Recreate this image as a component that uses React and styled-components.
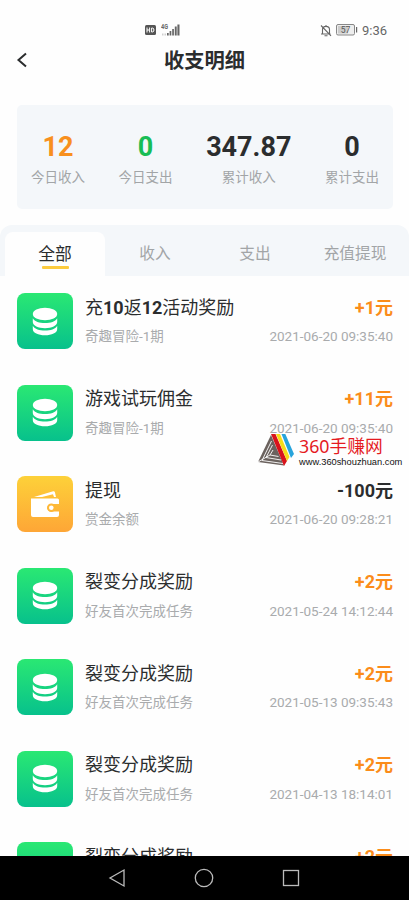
import React from 'react';
import styled, { createGlobalStyle, css } from 'styled-components'

const GlobalStyle = createGlobalStyle`
	* {
		box-sizing: border-box;
	}

	body {
		margin: 0;
		background: #fefefe;
		font-family: Roboto, "Noto Sans CJK SC", sans-serif;
		color: #2b2d2e;
	}
`

const Screen = styled.div`
	display: flex;
	flex-direction: column;
	width: 409px;
	height: 900px;
	overflow: hidden;
	background: #fefefe;
`

const StatusBar = styled.div`
	display: flex;
	align-items: center;
	justify-content: space-between;
	height: 22px;
	margin-top: 19px;
	padding: 0 22px 0 145px;
	flex: none;
`

const StatusGroup = styled.div`
	display: flex;
	align-items: center;
	gap: ${({ $gap }) => $gap}px;
`

const Clock = styled.span`
	padding-top: 1px;
	font-size: 13px;
	line-height: 22px;
	color: #666;
`

const Header = styled.header`
	display: grid;
	grid-template-columns: 44px 1fr 44px;
	align-items: center;
	height: 38px;
	flex: none;
`

const BackButton = styled.button`
	display: flex;
	padding: 0 0 2px 14px;
	border: 0;
	background: none;
`

const PageTitle = styled.h1`
	margin: 0;
	padding-top: 1px;
	font-size: 20.3px;
	font-weight: 700;
	line-height: 38px;
	text-align: center;
`

const Summary = styled.section`
	display: flex;
	justify-content: space-between;
	height: 104px;
	margin: 26px 16px 0 17px;
	padding: 26px 14px 0;
	border-radius: 5px;
	background: #f4f7fa;
	flex: none;
`

const Stat = styled.div`
	display: flex;
	flex-direction: column;
	align-items: center;
`

const StatValue = styled.strong`
	font-size: 27px;
	line-height: 32px;
	font-weight: 700;
	color: ${({ $color }) => $color || '#2b2d2e'};
`

const StatLabel = styled.span`
	margin-top: 4px;
	font-size: 13.5px;
	line-height: 20px;
	color: #a2a5a7;
`

const Tabs = styled.nav`
	display: grid;
	grid-template-columns: repeat(4, 100px);
	height: 51px;
	margin-top: 16px;
	padding: 7px 4px 0 5px;
	border-radius: 12px 12px 0 0;
	background: #f4f7fa;
	flex: none;
`

const Tab = styled.button`
	display: flex;
	flex-direction: column;
	align-items: center;
	padding: 10px 0 0;
	border: 0;
	background: none;
	font-family: inherit;
	font-size: 15.7px;
	line-height: 24px;
	color: #a2a5a7;

	${({ $active }) => $active && css`
		border-radius: 8px 8px 0 0;
		background: #fefefe;
		font-size: 16.8px;
		color: #2b2d2e;

		&::after {
			content: "";
			width: 27px;
			height: 3px;
			border-radius: 1px;
			background: #fccb3f;
		}
	`}
`

const List = styled.ul`
	flex: 1;
	min-height: 0;
	margin: 0;
	padding: 17px 16px 0 17px;
	overflow: hidden;
	list-style: none;
`

const Row = styled.li`
	display: flex;
	height: 91.5px;
`

const IconTile = styled.div`
	display: flex;
	align-items: center;
	justify-content: center;
	width: 56px;
	height: 56px;
	margin-right: 12px;
	border-radius: 8px;
	background: ${({ $wallet }) => $wallet
		? 'linear-gradient(#fdd139, #fea636)'
		: 'linear-gradient(#2ae873, #07c18c)'};
	flex: none;
`

const Detail = styled.div`
	display: flex;
	flex: 1;
	flex-direction: column;
	align-items: ${({ $end }) => $end ? 'flex-end' : 'flex-start'};
	white-space: nowrap;
`

const Name = styled.span`
	padding-top: .6px;
	font-size: 18px;
	line-height: 28px;

	& b {
		font-weight: 700;
	}
`

const Amount = styled.span`
	padding-top: .6px;
	font-size: 18px;
	font-weight: 700;
	line-height: 28px;
	color: ${({ $out }) => $out ? '#2b2d2e' : '#fb8c1a'};
`

const Note = styled.span`
	margin-top: 4.9px;
	font-size: 13.5px;
	line-height: 20px;
	color: #a9abad;
`

const NavBar = styled.footer`
	display: flex;
	align-items: center;
	justify-content: center;
	gap: 67px;
	height: 44px;
	padding-right: 1px;
	background: #000;
	flex: none;
`

// サイトロゴは一覧の上に重ねて表示する
const SiteMark = styled.div`
	position: absolute;
	top: 434px;
	left: 258px;
	display: flex;
	gap: 5px;
`

const SiteText = styled.div`
	display: flex;
	flex-direction: column;
	padding-top: 1px;
	white-space: nowrap;
`

const SiteName = styled.span`
	font-family: "Noto Sans", "Noto Sans CJK SC", sans-serif;
	font-size: 17.8px;
	line-height: 23px;
	color: #e51a1f;
`

const SiteUrl = styled.span`
	font-family: "Liberation Sans", Arial, sans-serif;
	font-size: 9.3px;
	line-height: 8px;
	color: #111;
`

const SignalIcon = () => (
	<svg width="21" height="14" viewBox="0 0 21 14">
		<text x="0" y="6" fontSize="7" fontWeight="700" textLength="7" lengthAdjust="spacingAndGlyphs" fill="#666">4G</text>
		<g fill="#666">
			<rect x="1" y="10.5" width="1.5" height="2" opacity=".3" />
			<rect x="3.5" y="10.5" width="1.5" height="2" opacity=".3" />
			<rect x="6" y="10" width="1.7" height="2.5" />
			<rect x="8.6" y="8" width="1.7" height="4.5" />
			<rect x="11.2" y="6" width="1.7" height="6.5" />
			<rect x="13.8" y="3.5" width="1.9" height="9" />
			<rect x="16.4" y="1.5" width="2.1" height="11" />
		</g>
	</svg>
)

const HdIcon = () => (
	<svg width="11" height="10" viewBox="0 0 11 10">
		<rect width="11" height="10" rx="1.5" fill="#555" />
		<path d="M2 2.5v5M4.6 2.5v5M2 5h2.6M6.6 3v4h1.2l1-1V4l-1-1z" fill="none" stroke="#fff" />
	</svg>
)

const MuteIcon = () => (
	<svg width="12" height="13" viewBox="0 0 12 13" fill="none" stroke="#666" strokeWidth="1.1">
		<path d="M1 10h9.5M2.500 9.500V5.600c0-1.900 1.500-3.200 3.500-3.200s3.500 1.300 3.500 3.200v3.900M6 2.4V1M4.500 11.800h3M1 1.500l10 10.3" />
	</svg>
)

const BatteryIcon = () => (
	<svg width="22" height="12" viewBox="0 0 22 12">
		<rect x=".5" y=".5" width="18" height="10.5" rx="1.5" fill="#eee" stroke="#888" />
		<rect x="2" y="2" width="10" height="7.5" fill="#ccc" />
		<rect x="20" y="3" width="1.2" height="5.5" fill="#666" />
		<text x="4.7" y="9" fontSize="8.5" fill="#555">57</text>
	</svg>
)

const CoinsIcon = () => (
	<svg width="26" height="29" viewBox="0 0 26 29" fill="#fff">
		<ellipse cx="13" cy="7" rx="12.2" ry="6.2" />
		<path d="M.8 11.2c2 3.6 6.5 4.8 12.2 4.8s10.200-1.200 12.200-4.800v3.800c0 3.700-5.500 6.200-12.200 6.200S.8 18.700.8 15z" />
		<path d="M.8 18.700c2 3.500 6.500 4.700 12.200 4.700s10.200-1.200 12.200-4.700v3.300c0 3.900-5.500 6.300-12.200 6.300S.8 25.900.8 22z" />
	</svg>
)

const WalletIcon = () => (
	<svg width="30" height="28" viewBox="0 0 30 28">
		<path d="M4 7L23.2 1.300c.8-.3 1.500.1 1.700.9L26 7z" fill="#fff" />
		<path d="M12 7h12l-1-2.800z" fill="#febf3a" />
		<path d="M1 8.500h26.500a1.500 1.500 0 0 1 1.500 1.500v4h-7.800a3.700 3.700 0 0 0 0 7.400H29V25a2 2 0 0 1-2 2H3a2 2 0 0 1-2-2z" fill="#fff" />
		<circle cx="21.3" cy="17.700" r="4.300" fill="#feb838" />
		<circle cx="21.3" cy="17.700" r="2.300" fill="#fff" />
	</svg>
)

const SiteLogo = () => (
	<svg width="36" height="33" viewBox="0 0 36 33">
		<path d="M13 1L0 28l26 3.500z" fill="#6b625e" />
		<path d="M13.500 7L4 26.500l21 3M14.500 11L8 23.500l15 2.500M15 16l-3 5 8.500 1.500M0 28l12-7" fill="none" stroke="#fff" strokeWidth=".9" />
		<path d="M13 0h4.500l11.500 27-3 5z" fill="#d8141c" />
		<path d="M18 0h4l9.500 23-2.500 4z" fill="#f8dc18" />
		<path d="M23.500 0h3.800L36 20l-3 4z" fill="#27a4dc" />
	</svg>
)

const stats = [
	{ value: '12', label: '今日收入', color: '#f8901e' },
	{ value: '0', label: '今日支出', color: '#18bd55' },
	{ value: '347.87', label: '累计收入' },
	{ value: '0', label: '累计支出' },
]

const tabs = ['全部', '收入', '支出', '充值提现']

const records = [
	{ name: '充10返12活动奖励', note: '奇趣冒险-1期', amount: '+1元', time: '2021-06-20 09:35:40' },
	{ name: '游戏试玩佣金', note: '奇趣冒险-1期', amount: '+11元', time: '2021-06-20 09:35:40' },
	{ name: '提现', note: '赏金余额', amount: '-100元', time: '2021-06-20 09:28:21', out: true },
	{ name: '裂变分成奖励', note: '好友首次完成任务', amount: '+2元', time: '2021-05-24 14:12:44' },
	{ name: '裂变分成奖励', note: '好友首次完成任务', amount: '+2元', time: '2021-05-13 09:35:43' },
	{ name: '裂变分成奖励', note: '好友首次完成任务', amount: '+2元', time: '2021-04-13 18:14:01' },
	// 最後の行は途中で切れるので名前と金額だけ
	{ name: '裂变分成奖励', amount: '+2元' },
]

// 数字だけ太字にする
const boldDigits = (text) => text.split(/(\d+)/).map((part, i) => (
	/\d/.test(part) ? <b key={i}>{part}</b> : part
))

const App = () => (
	<Screen>
		<GlobalStyle />
		<StatusBar>
			<StatusGroup $gap={5}>
				<HdIcon />
				<SignalIcon />
			</StatusGroup>
			<StatusGroup $gap={4}>
				<MuteIcon />
				<BatteryIcon />
				<Clock>9:36</Clock>
			</StatusGroup>
		</StatusBar>
		<Header>
			<BackButton aria-label="返回">
				<svg width="14" height="16" viewBox="0 0 14 16" fill="none" stroke="#2b2d2e" strokeWidth="2">
					<path d="M12 1.5L4.500 8l7.500 6.500" />
				</svg>
			</BackButton>
			<PageTitle>收支明细</PageTitle>
		</Header>
		<Summary>
			{
				stats.map(({ value, label, color }) => (
					<Stat key={label}>
						<StatValue $color={color}>{value}</StatValue>
						<StatLabel>{label}</StatLabel>
					</Stat>
				))
			}
		</Summary>
		<Tabs>
			{tabs.map((tab, i) => <Tab key={tab} $active={i === 0}>{tab}</Tab>)}
		</Tabs>
		<List>
			{
				records.map(({ name, note, amount, time, out }, i) => (
					<Row key={i}>
						<IconTile $wallet={out}>
							{out ? <WalletIcon /> : <CoinsIcon />}
						</IconTile>
						<Detail>
							<Name>{boldDigits(name)}</Name>
							{note && <Note>{note}</Note>}
						</Detail>
						<Detail $end>
							<Amount $out={out}>{amount}</Amount>
							{time && <Note>{time}</Note>}
						</Detail>
					</Row>
				))
			}
		</List>
		<NavBar>
			<svg width="20" height="20" viewBox="0 0 20 20" fill="none" stroke="#bbb" strokeWidth="1.3">
				<path d="M17 2v16L3 10z" />
			</svg>
			<svg width="20" height="20" viewBox="0 0 20 20" fill="none" stroke="#bbb" strokeWidth="1.3">
				<circle cx="10" cy="10" r="8.7" />
			</svg>
			<svg width="20" height="20" viewBox="0 0 20 20" fill="none" stroke="#bbb" strokeWidth="1.3">
				<rect x="2.5" y="2.5" width="15" height="15" />
			</svg>
		</NavBar>
		<SiteMark>
			<SiteLogo />
			<SiteText>
				<SiteName>360手赚网</SiteName>
				<SiteUrl>www.360shouzhuan.com</SiteUrl>
			</SiteText>
		</SiteMark>
	</Screen>
)

export default App;
